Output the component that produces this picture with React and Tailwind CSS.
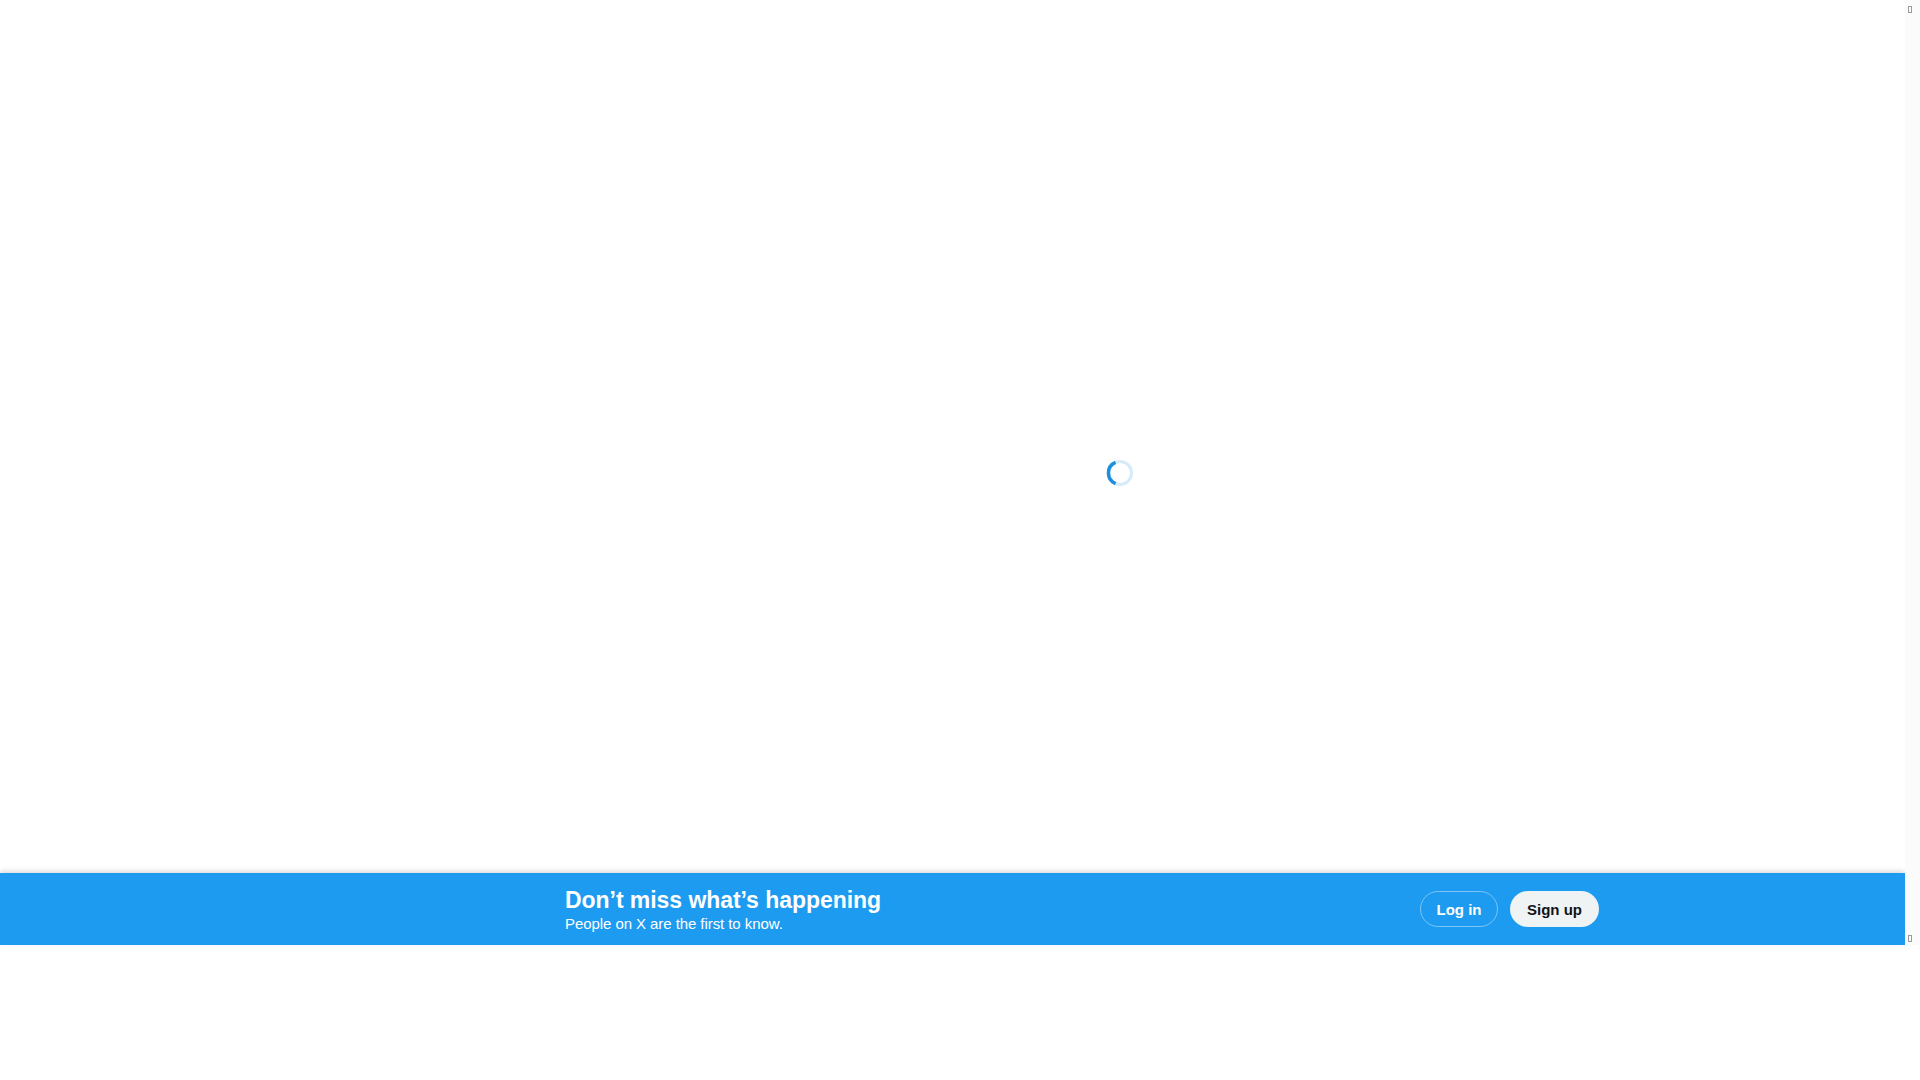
export default function App() {
  return (
    <div className="flex h-screen w-full overflow-hidden bg-white font-['Liberation_Sans',Arial,sans-serif]">
      <div className="flex w-[1905px] flex-col">
        {/* Timeline still loading */}
        <main className="flex h-[873px] items-center justify-center pt-[73px] pl-[334px]">
          <svg width="28" height="28" viewBox="0 0 28 28">
            <circle cx="14" cy="14" r="11.5" fill="none" stroke="#d4ebfa" strokeWidth="3" />
            <path d="M9.5 3.4A11.5 11.5 0 0 0 9.5 24.6" fill="none" stroke="#1d8fdb" strokeWidth="3.5" />
          </svg>
        </main>

        {/* Logged-out bottom bar */}
        <div className="flex h-[72px] items-center bg-[#1d9bf0] pl-[565px] shadow-[0_-2px_5px_rgba(0,0,0,0.15)]">
          <div className="flex w-[1034px] items-center justify-between">
            <div className="flex flex-col pt-[2px]">
              <span className="text-[23px] leading-[28px] font-bold tracking-[-0.05px] text-white">Don’t miss what’s happening</span>
              <span className="text-[15px] leading-[20px] tracking-[-0.07px] text-white">People on X are the first to know.</span>
            </div>
            <div className="flex items-center gap-3">
              <button className="h-9 w-[78px] rounded-full border border-[#7cc5f6] pt-[2px] text-[15px] font-bold text-white">Log in</button>
              <button className="h-9 w-[89px] rounded-full bg-[#eff3f4] pt-[2px] text-[15px] font-bold text-[#0f1419]">Sign up</button>
            </div>
          </div>
        </div>
      </div>

      {/* Scrollbar with its arrow glyphs missing */}
      <div className="flex h-[945px] w-[15px] flex-col items-center justify-between bg-[#fbfbfb] pt-[6px] pr-[5px] pb-[3px]">
        <div className="h-[7px] w-[4px] border border-[#9a9a9a]" />
        <div className="h-[7px] w-[4px] border border-[#9a9a9a]" />
      </div>
    </div>
  );
}
